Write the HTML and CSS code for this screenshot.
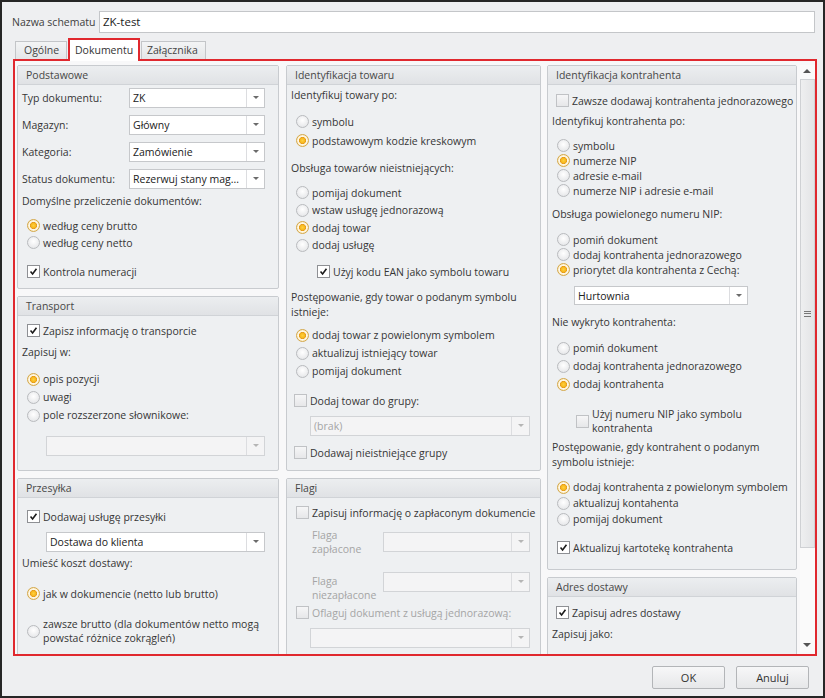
FILE: index.html
```html
<!DOCTYPE html>
<html lang="pl">
<head>
    <meta charset="UTF-8">
    <title>Schemat importu</title>
    <link rel="stylesheet" href="styles.css">
</head>
<body>
<div class="window">
    <div class="name-row">
        <span class="name-label">Nazwa schematu</span>
        <div class="textbox">ZK-test</div>
    </div>

    <div class="tabs">
        <div class="tab">Ogólne</div>
        <div class="tab active">Dokumentu</div>
        <div class="tab">Załącznika</div>
    </div>

    <div class="tab-page">
        <div class="columns">
            <!-- lewa kolumna -->
            <div class="col col-left">
                <div class="panel h-basic">
                    <div class="panel-head">Podstawowe</div>
                    <div class="panel-body">
                        <div class="fields">
                            <div class="field"><span class="field-label">Typ dokumentu:</span><div class="combo w136"><span class="val">ZK</span><span class="arrow"></span></div></div>
                            <div class="field"><span class="field-label">Magazyn:</span><div class="combo w136"><span class="val">Główny</span><span class="arrow"></span></div></div>
                            <div class="field"><span class="field-label">Kategoria:</span><div class="combo w136"><span class="val">Zamówienie</span><span class="arrow"></span></div></div>
                            <div class="field"><span class="field-label">Status dokumentu:</span><div class="combo w136"><span class="val">Rezerwuj stany mag...</span><span class="arrow"></span></div></div>
                        </div>
                        <div class="caption mt5">Domyślne przeliczenie dokumentów:</div>
                        <div class="opts r17 mt8">
                            <div class="opt"><span class="rb on"></span>według ceny brutto</div>
                            <div class="opt"><span class="rb"></span>według ceny netto</div>
                        </div>
                        <div class="opt chk mt12"><span class="cb on"><svg viewBox="0 0 13 13"><path d="M3 6.6 L5.4 9.4 L10 3.2"/></svg></span>Kontrola numeracji</div>
                    </div>
                </div>

                <div class="panel h-transport">
                    <div class="panel-head">Transport</div>
                    <div class="panel-body">
                        <div class="opt chk mt6"><span class="cb on"><svg viewBox="0 0 13 13"><path d="M3 6.6 L5.4 9.4 L10 3.2"/></svg></span>Zapisz informację o transporcie</div>
                        <div class="caption mt6">Zapisuj w:</div>
                        <div class="opts r18 mt10">
                            <div class="opt"><span class="rb on"></span>opis pozycji</div>
                            <div class="opt"><span class="rb"></span>uwagi</div>
                            <div class="opt"><span class="rb"></span>pole rozszerzone słownikowe:</div>
                        </div>
                        <div class="combo disabled w219 ml24 mt12"><span class="val"></span><span class="arrow"></span></div>
                    </div>
                </div>

                <div class="panel h-rest">
                    <div class="panel-head">Przesyłka</div>
                    <div class="panel-body">
                        <div class="opt chk mt10"><span class="cb on"><svg viewBox="0 0 13 13"><path d="M3 6.6 L5.4 9.4 L10 3.2"/></svg></span>Dodawaj usługę przesyłki</div>
                        <div class="combo w219 ml24 mt7"><span class="val">Dostawa do klienta</span><span class="arrow"></span></div>
                        <div class="caption mt4">Umieść koszt dostawy:</div>
                        <div class="opt r17 mt14"><span class="rb on"></span>jak w dokumencie (netto lub brutto)</div>
                        <div class="opt multi mt15"><span class="rb"></span><span>zawsze brutto (dla dokumentów netto mogą<br>powstać różnice zokrągleń)</span></div>
                    </div>
                </div>
            </div>

            <!-- środkowa kolumna -->
            <div class="col col-mid">
                <div class="panel h-goods">
                    <div class="panel-head">Identyfikacja towaru</div>
                    <div class="panel-body">
                        <div class="caption pt3">Identyfikuj towary po:</div>
                        <div class="opts r19 mt9">
                            <div class="opt"><span class="rb"></span>symbolu</div>
                            <div class="opt"><span class="rb on"></span>podstawowym kodzie kreskowym</div>
                        </div>
                        <div class="caption mt11">Obsługa towarów nieistniejących:</div>
                        <div class="opts r17h mt8">
                            <div class="opt"><span class="rb"></span>pomijaj dokument</div>
                            <div class="opt"><span class="rb"></span>wstaw usługę jednorazową</div>
                            <div class="opt"><span class="rb on"></span>dodaj towar</div>
                            <div class="opt"><span class="rb"></span>dodaj usługę</div>
                        </div>
                        <div class="opt chk ml26 mt9"><span class="cb on"><svg viewBox="0 0 13 13"><path d="M3 6.6 L5.4 9.4 L10 3.2"/></svg></span>Użyj kodu EAN jako symbolu towaru</div>
                        <div class="caption mt10">Postępowanie, gdy towar o podanym symbolu<br>istnieje:</div>
                        <div class="opts r18 mt6">
                            <div class="opt"><span class="rb on"></span>dodaj towar z powielonym symbolem</div>
                            <div class="opt"><span class="rb"></span>aktualizuj istniejący towar</div>
                            <div class="opt"><span class="rb"></span>pomijaj dokument</div>
                        </div>
                        <div class="opt chk ml3 mt12"><span class="cb"></span>Dodaj towar do grupy:</div>
                        <div class="combo disabled w220 ml19 mt7"><span class="val">(brak)</span><span class="arrow"></span></div>
                        <div class="opt chk ml3 mt8"><span class="cb"></span>Dodawaj nieistniejące grupy</div>
                    </div>
                </div>

                <div class="panel h-rest">
                    <div class="panel-head">Flagi</div>
                    <div class="panel-body">
                        <div class="opt chk mt6"><span class="cb"></span>Zapisuj informację o zapłaconym dokumencie</div>
                        <div class="flag-row mt11">
                            <span class="flag-label">Flaga<br>zapłacone</span>
                            <div class="combo disabled w147"><span class="val"></span><span class="arrow"></span></div>
                        </div>
                        <div class="flag-row low mt20">
                            <span class="flag-label">Flaga<br>niezapłacone</span>
                            <div class="combo disabled w147"><span class="val"></span><span class="arrow"></span></div>
                        </div>
                        <div class="opt chk off mt12"><span class="cb"></span>Oflaguj dokument z usługą jednorazową:</div>
                        <div class="combo disabled w220 ml19 mt7"><span class="val"></span><span class="arrow"></span></div>
                    </div>
                </div>
            </div>

            <!-- prawa kolumna -->
            <div class="col col-right">
                <div class="panel h-client">
                    <div class="panel-head">Identyfikacja kontrahenta</div>
                    <div class="panel-body">
                        <div class="opt chk ml4 mt7"><span class="cb"></span>Zawsze dodawaj kontrahenta jednorazowego</div>
                        <div class="caption mt5">Identyfikuj kontrahenta po:</div>
                        <div class="opts r15 mt9">
                            <div class="opt"><span class="rb"></span>symbolu</div>
                            <div class="opt"><span class="rb on"></span>numerze NIP</div>
                            <div class="opt"><span class="rb"></span>adresie e-mail</div>
                            <div class="opt"><span class="rb"></span>numerze NIP i adresie e-mail</div>
                        </div>
                        <div class="caption mt9">Obsługa powielonego numeru NIP:</div>
                        <div class="opts r15 mt10">
                            <div class="opt"><span class="rb"></span>pomiń dokument</div>
                            <div class="opt"><span class="rb"></span>dodaj kontrahenta jednorazowego</div>
                            <div class="opt"><span class="rb on"></span>priorytet dla kontrahenta z Cechą:</div>
                        </div>
                        <div class="combo short w174 ml22 mt9"><span class="val">Hurtownia</span><span class="arrow"></span></div>
                        <div class="caption mt10">Nie wykryto kontrahenta:</div>
                        <div class="opts r18 mt9">
                            <div class="opt"><span class="rb"></span>pomiń dokument</div>
                            <div class="opt"><span class="rb"></span>dodaj kontrahenta jednorazowego</div>
                            <div class="opt"><span class="rb on"></span>dodaj kontrahenta</div>
                        </div>
                        <div class="opt multi chk ml24 mt14"><span class="cb"></span><span>Użyj numeru NIP jako symbolu<br>kontrahenta</span></div>
                        <div class="caption mt5">Postępowanie, gdy kontrahent o podanym<br>symbolu istnieje:</div>
                        <div class="opts r16 mt9">
                            <div class="opt"><span class="rb on"></span>dodaj kontrahenta z powielonym symbolem</div>
                            <div class="opt"><span class="rb"></span>aktualizuj kontahenta</div>
                            <div class="opt"><span class="rb"></span>pomijaj dokument</div>
                        </div>
                        <div class="opt chk mt12"><span class="cb on"><svg viewBox="0 0 13 13"><path d="M3 6.6 L5.4 9.4 L10 3.2"/></svg></span>Aktualizuj kartotekę kontrahenta</div>
                    </div>
                </div>

                <div class="panel h-rest">
                    <div class="panel-head">Adres dostawy</div>
                    <div class="panel-body">
                        <div class="opt chk ml4 mt7"><span class="cb on"><svg viewBox="0 0 13 13"><path d="M3 6.6 L5.4 9.4 L10 3.2"/></svg></span>Zapisuj adres dostawy</div>
                        <div class="caption mt6">Zapisuj jako:</div>
                    </div>
                </div>
            </div>
        </div>

        <div class="scrollbar">
            <div class="sb-btn up"></div>
            <div class="sb-thumb"><span class="grip"></span></div>
            <div class="sb-track"></div>
            <div class="sb-btn down"></div>
        </div>
    </div>

    <div class="buttons">
        <button class="btn">OK</button>
        <button class="btn">Anuluj</button>
    </div>
</div>
</body>
</html>
```

FILE: styles.css
```css
* {
    box-sizing: border-box;
}

body {
    margin: 0;
    font-family: "Open Sans", "Noto Sans", sans-serif;
    font-size: 10.5px;
    color: #363636;
}

.window {
    width: 825px;
    height: 698px;
    border: 2px solid #262626;
    background: #eeeff1;
    overflow: hidden;
}

/* Nazwa schematu */
.name-row {
    display: flex;
    align-items: center;
    padding: 9px 8px 0 10px;
}

.name-label {
    width: 87px;
    color: #404040;
}

.textbox {
    flex: 1;
    height: 22px;
    line-height: 20px;
    padding-left: 3px;
    background: #fff;
    border: 1px solid #c4c6c9;
    font-size: 11.5px;
    color: #222;
}

/* Zakładki */
.tabs {
    display: flex;
    align-items: flex-end;
    gap: 1px;
    margin: 5px 0 0 13px;
    height: 21px;
}

.tab {
    height: 18px;
    line-height: 17px;
    padding: 0 8px;
    border: 1px solid #c3c5c8;
    border-bottom: none;
    background: linear-gradient(#f3f4f5, #e4e6e8);
    color: #444;
}

.tab:first-child {
    width: 52px;
}

.tab:last-child {
    width: 65px;
    padding-left: 5px;
}

.tab.active {
    position: relative;
    z-index: 1;
    width: 72px;
    height: 23px;
    margin-bottom: -2px;
    padding-left: 5px;
    line-height: 20px;
    background: #fff;
    border: 2px solid #e0282e;
    border-bottom: none;
    color: #333;
}

.tab-page {
    display: flex;
    width: 804px;
    height: 597px;
    margin-left: 11px;
    border: 2px solid #e0282e;
    background: #f8f8f9;
    overflow: hidden;
}

.columns {
    display: flex;
    gap: 7px;
    padding: 4px 0 0 2px;
    width: 784px;
    overflow: hidden;
}

.col {
    display: flex;
    flex-direction: column;
    gap: 7px;
}

.col-left {
    width: 262px;
}

.col-mid {
    width: 255px;
    margin-right: -1px;
}

.col-right {
    width: 250px;
}

/* Panele */
.panel {
    flex-shrink: 0;
    background: #eef0f2;
    border: 1px solid #c8cbcf;
    border-radius: 2px;
}

.h-basic { height: 224px; }
.h-transport { height: 175px; }
.h-goods { height: 406px; }
.h-client { height: 505px; }
.h-rest { height: 190px; }

.panel-head {
    height: 19px;
    line-height: 18px;
    padding-left: 8px;
    background: linear-gradient(#eceef0, #e0e2e5);
    border-bottom: 1px solid #d0d3d7;
    color: #474747;
}

.panel-body {
    padding: 0 4px;
}

.caption {
    line-height: 15px;
}

.fields {
    display: flex;
    flex-direction: column;
    gap: 7px;
    padding-top: 3px;
}

.field {
    display: flex;
    align-items: center;
    height: 20px;
}

.field-label {
    width: 107px;
}

/* Lista rozwijana */
.combo {
    display: flex;
    height: 20px;
    background: #fff;
    border: 1px solid #c6c8cb;
}

.combo .val {
    flex: 1;
    padding-left: 3px;
    line-height: 18px;
    color: #222;
    white-space: nowrap;
    overflow: hidden;
}

.combo .arrow {
    position: relative;
    width: 18px;
    border-left: 1px solid #dcdde0;
}

.combo .arrow::after {
    content: "";
    position: absolute;
    left: 6px;
    top: 7px;
    border-left: 3px solid transparent;
    border-right: 3px solid transparent;
    border-top: 3px solid #6b6b6b;
}

.combo.short {
    height: 19px;
}

.combo.disabled {
    background: #f4f4f5;
    border-color: #d2d4d7;
}

.combo.disabled .val {
    color: #a5a5a5;
}

.combo.disabled .arrow::after {
    border-top-color: #b5b5b5;
}

.w136 { width: 136px; }
.w147 { width: 147px; }
.w174 { width: 174px; }
.w219 { width: 219px; }
.w220 { width: 220px; }

/* Opcje: radio i checkbox */
.opt {
    display: flex;
    align-items: center;
    height: 17px;
    margin-left: 5px;
    white-space: nowrap;
}

.opts.r15 .opt { height: 15px; }
.opts.r16 .opt { height: 16px; }
.opts.r17 .opt { height: 17px; }
.opts.r17h .opt { height: 17.5px; }
.opts.r18 .opt { height: 18px; }
.opts.r19 .opt { height: 19px; }

.opt.multi {
    height: 28px;
    line-height: 14px;
}

.opt.off {
    color: #a5a5a5;
}

.rb {
    flex-shrink: 0;
    width: 13px;
    height: 13px;
    margin-right: 3px;
    border-radius: 50%;
    border: 1px solid #b9bbbe;
    background: radial-gradient(circle at 50% 40%, #ffffff 0, #e9eaec 70%, #d9dbde 100%);
}

.rb.on {
    border-color: #d4a84a;
    background: radial-gradient(circle, #ffd13c 0, #f6b51c 2.6px, #e0951a 3.3px, #fff9ea 3.8px, #fdf1d4 5px, #f0dca8 6px);
}

.cb {
    flex-shrink: 0;
    width: 13px;
    height: 13px;
    margin-right: 3px;
    border: 1px solid #c0c2c5;
    background: linear-gradient(#f6f6f7, #e6e7e9);
}

.cb.on {
    border-color: #8e9094;
    background: #fff;
}

.cb svg {
    display: block;
    width: 11px;
    height: 11px;
}

.cb path {
    fill: none;
    stroke: #1b1b1b;
    stroke-width: 1.9;
}

/* Flagi */
.flag-row {
    display: flex;
    align-items: center;
    height: 20px;
    margin-left: 21px;
}

.flag-row.low {
    align-items: flex-start;
}

.flag-row.low .flag-label {
    margin-top: 2px;
}

.flag-label {
    width: 71px;
    line-height: 14px;
    color: #a5a5a5;
}

/* Odstępy */
.pt3 { padding-top: 3px; }
.mt4 { margin-top: 4px; }
.mt5 { margin-top: 5px; }
.mt6 { margin-top: 6px; }
.mt7 { margin-top: 7px; }
.mt8 { margin-top: 8px; }
.mt9 { margin-top: 9px; }
.mt10 { margin-top: 10px; }
.mt11 { margin-top: 11px; }
.mt12 { margin-top: 12px; }
.mt14 { margin-top: 14px; }
.mt15 { margin-top: 15px; }
.mt20 { margin-top: 20px; }
.ml3 { margin-left: 3px; }
.ml4 { margin-left: 4px; }
.ml19 { margin-left: 19px; }
.ml22 { margin-left: 22px; }
.ml24 { margin-left: 24px; }
.ml26 { margin-left: 26px; }

/* Pasek przewijania */
.scrollbar {
    display: flex;
    flex-direction: column;
    width: 15px;
    margin: 4px 0 2px 2px;
    background: #fafafa;
}

.sb-btn {
    position: relative;
    height: 14px;
}

.sb-btn::after {
    content: "";
    position: absolute;
    left: 3px;
    border-left: 4px solid transparent;
    border-right: 4px solid transparent;
}

.sb-btn.up::after {
    top: 4px;
    border-bottom: 4px solid #555;
}

.sb-btn.down::after {
    top: 5px;
    border-top: 4px solid #555;
}

.sb-thumb {
    display: flex;
    align-items: center;
    justify-content: center;
    height: 469px;
    background: linear-gradient(90deg, #eeeff0, #e3e4e6);
    border: 1px solid #cfd1d4;
}

.grip {
    width: 7px;
    height: 6px;
    border-top: 1px solid #777;
    border-bottom: 1px solid #777;
    background: linear-gradient(#777, #777) center / 100% 1px no-repeat;
}

.sb-track {
    flex: 1;
}

/* Przyciski */
.buttons {
    display: flex;
    justify-content: flex-end;
    gap: 11px;
    padding: 10px 14px 0 0;
}

.btn {
    width: 73px;
    height: 23px;
    font-family: inherit;
    font-size: 11px;
    color: #333;
    border: 1px solid #b3b5b8;
    border-radius: 2px;
    background: linear-gradient(#f7f7f8, #e6e7e9);
}
```
